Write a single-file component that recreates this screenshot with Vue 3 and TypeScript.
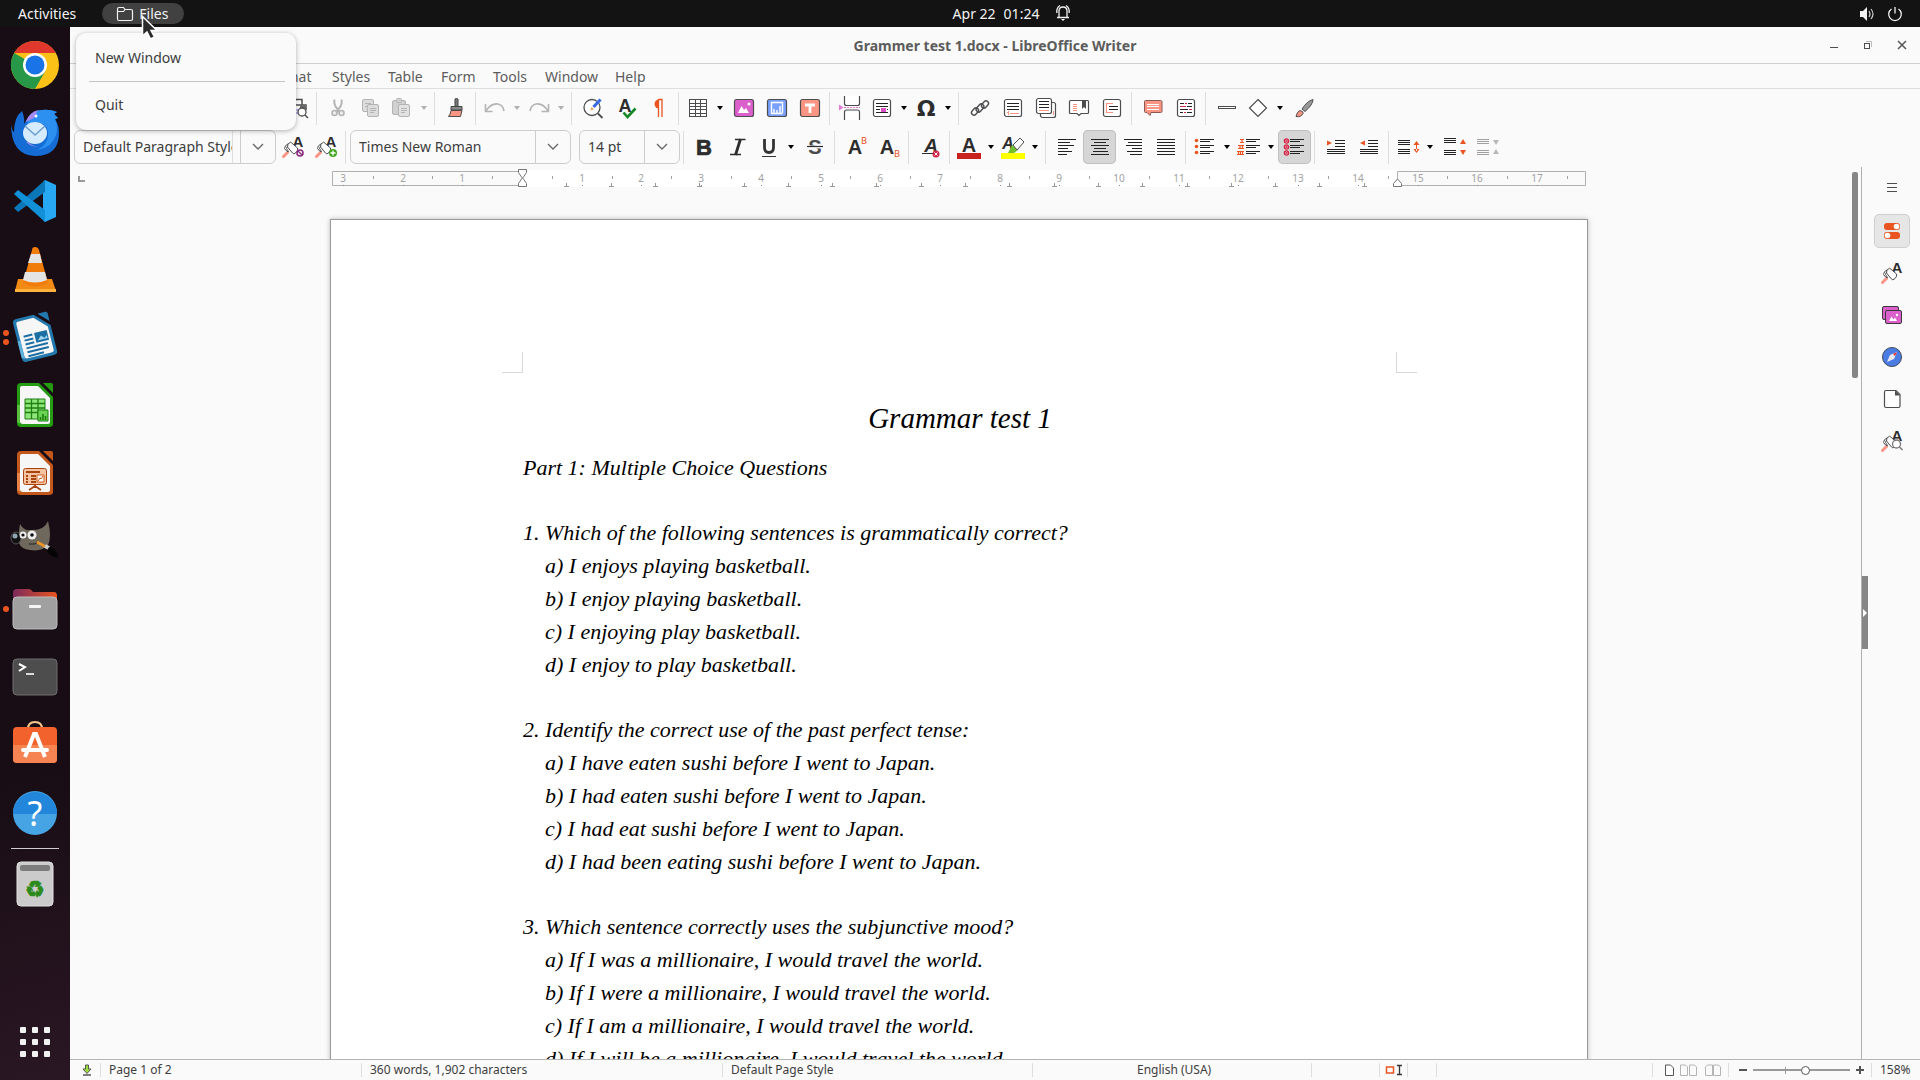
<script setup lang="ts">
import { ref } from 'vue'

type Tool = { icon: string; label: string; kind?: 'split' | 'sep'; active?: boolean; muted?: boolean }

const sep: Tool = { icon: '', label: '', kind: 'sep' }
const tool = (icon: string, label: string, extra: Partial<Tool> = {}): Tool => ({ icon, label, ...extra })
const split = (icon: string, label: string, extra: Partial<Tool> = {}): Tool => ({ icon, label, kind: 'split', ...extra })

const letter = (x: number, y: number, size: number, t: string, fill = '#2d2d2d', more = '') =>
  `<text x="${x}" y="${y}" font-family="Liberation Sans" font-weight="bold" font-size="${size}" text-anchor="middle" fill="${fill}" ${more}>${t}</text>`

const lines = (rows: [number, number, number][], color = '#222') =>
  `<path stroke="${color}" stroke-width="1" fill="none" d="${rows.map(([x, y, w]) => `M${x} ${y}.5h${w}`).join('')}"/>`

const bars = (rows: [number, number, number][], color = '#222') =>
  `<path fill="${color}" d="${rows.map(([x, y, w]) => `M${x} ${y}h${w}v1h-${w}z`).join('')}"/>`

const styleBrush = `<path d="M2.500 21.500l4-4" stroke="#fa9583" stroke-width="3" stroke-linecap="round"/><path d="M3.500 13.500q0-3 4-5l1 1q-3 2-3 4l2 3h-1.500z" fill="#fff" stroke="#4d4d4f"/><path d="M7 9.500l2.500-2.500 7 6q1 2-1.500 4.500t-3.500.5L6.500 12z" fill="#fff" stroke="#4d4d4f"/>`
const frame = (fill = '#fff') => `<rect x="3.500" y="3.500" width="17" height="17" rx="2" fill="${fill}" stroke="#4d4d4f" stroke-width="1.200"/>`

const icons: Record<string, string> = {
  blank: frame(),
  preview: `<path d="M5 9V3.500h12V9M3 17V9h18v5" fill="#fff" stroke="#4d4d4f" stroke-width="1.500"/><path d="M15 9h6v4h-6z" fill="#6a6a6a"/><path d="M9 14h5M9 17h5" stroke="#7b7bf0"/><circle cx="17" cy="16" r="4" fill="#fff" stroke="#4d4d4f" stroke-width="1.300"/><path d="M20 19l3 3" stroke="#4d4d4f" stroke-width="1.500"/>`,
  cut: `<path d="M8.500 3.500q-1 5 2.500 9l3 4M15.500 3.500q1 5-2.500 9l-3 4" stroke="#b4b4b4" stroke-width="2" fill="none"/><circle cx="8.500" cy="17" r="2.500" fill="#eee" stroke="#b4b4b4" stroke-width="1.600"/><circle cx="15.500" cy="17" r="2.500" fill="#eee" stroke="#b4b4b4" stroke-width="1.600"/>`,
  copy: `<g fill="#dcdcdc" stroke="#b4b4b4"><rect x="3.500" y="3.500" width="11" height="12" rx="1.500"/><path d="M6 7.500h6M6 10.500h3"/><rect x="8.500" y="8.500" width="11" height="12" rx="1.500"/><path d="M11 12.500h6M11 14.500h6M11 16.500h4"/></g>`,
  paste: `<g fill="#d0d0d0" stroke="#b4b4b4"><rect x="2.500" y="4.500" width="13" height="14" rx="1.500"/><rect x="6.500" y="2.500" width="5" height="4" rx="1"/><rect x="8.500" y="8.500" width="11" height="12" rx="1.500" fill="#e2e2e2"/><path d="M11 12.500h6M11 14.500h6M11 16.500h4"/></g>`,
  clone: `<path d="M11 3q1.500-1 3 0v8h-3z" fill="#777" stroke="#444"/><path d="M7 10.500h11v3.500H7z" fill="#8a8a8a" stroke="#444"/><path d="M7 14.500h11l-1.500 6H4.500q2-2 2.500-6z" fill="#fa9583" stroke="#4d4d4f"/>`,
  undo: `<path d="M2.500 8v7.500h7M3 15q5-8 12-7 5 1 6 7" fill="none" stroke="#b4b4b4" stroke-width="1.600"/>`,
  redo: `<path d="M21.500 8v7.500h-7M21 15q-5-8-12-7-5 1-6 7" fill="none" stroke="#b4b4b4" stroke-width="1.600"/>`,
  find: `<circle cx="11" cy="11.500" r="8" fill="#fff" stroke="#4d4d4f" stroke-width="1.300"/><path d="M17 17.500l4.500 4.500" stroke="#4d4d4f" stroke-width="1.800"/><path d="M12.500 11l7-7.500" stroke="#3b6be4" stroke-width="3.200"/><path d="M9.500 14.500l1-3.500 2.500 2.300z" fill="#e9a04e"/>`,
  spell: `${letter(11, 16, 18, 'A')}<path d="M9.500 16.500l4 4.500 8-8.500" fill="none" stroke="#178a26" stroke-width="2.600"/>`,
  pilcrow: `<path d="M12 3.500a4.500 4.500 0 0 0 0 9z" fill="#e95420"/><path d="M11.500 3v18M15 3v18M11.500 3.500h4" stroke="#e95420" stroke-width="1.300" fill="none"/>`,
  table: `<rect x="3.500" y="3.500" width="17" height="17" fill="#fff" stroke="#4d4d4f"/><path d="M3 7.500h18M3 10.500h18M3 13.500h18M3 17.500h18M9.500 4v17M14.500 4v17" stroke="#4d4d4f"/>`,
  image: `<rect x="2.500" y="3.500" width="19" height="17" rx="2" fill="#dc60cc" stroke="#4d4d4f" stroke-width="1.200"/><path d="M6 17l3.500-7 2.500 4 2-2 3 5z" fill="#fff"/><circle cx="17" cy="8" r="1.500" fill="#fff"/>`,
  chart: `<rect x="2.500" y="3.500" width="19" height="17" rx="2" fill="#7aa0ff" stroke="#4d4d4f" stroke-width="1.200"/><path d="M6.500 6v11.500h11M6 6.500h11.500V17M9 17v-4M12 17v-3M15 17v-7" fill="none" stroke="#fff" stroke-width="1.400"/>`,
  textbox: `<rect x="2.500" y="3.500" width="19" height="17" rx="2" fill="#fa9583" stroke="#4d4d4f" stroke-width="1.200"/><path d="M7 9h10M12 9v8" stroke="#fff" stroke-width="2.800"/>`,
  pagebreak: `<path d="M5.500 0v7.500q0 2 2 2h11q2 0 2-2V0M5.500 24v-8q0-2 2-2h11q2 0 2 2v8" fill="#fff" stroke="#4d4d4f" stroke-width="1.200"/><path d="M0 8.500v6l4.500-3z" fill="#e07ad4"/><path d="M5 11.500h16" stroke="#e07ad4" stroke-dasharray="2 1"/>`,
  field: `${frame()}${bars([[6, 7, 12], [6, 10, 12], [6, 13, 4], [17, 13, 1], [6, 16, 12]])}<path d="M11 12h5v4h-5z" fill="#dc4fc8"/>`,
  omega: `<text x="12" y="20" font-family="DejaVu Sans" font-weight="bold" font-size="22" text-anchor="middle" fill="#2d2d2d">Ω</text>`,
  link: `<g fill="none" stroke="#4d4d4f" stroke-width="1.400"><rect x="3" y="13" width="8" height="5" rx="2.500" transform="rotate(-48 7 15.500)"/><rect x="7.500" y="9.500" width="9" height="5" rx="2.500" transform="rotate(-48 12 12)"/><rect x="13" y="6" width="8" height="5" rx="2.500" transform="rotate(-48 17 8.500)"/></g>`,
  footnote: `${frame()}${bars([[6, 7, 12], [6, 10, 12], [6, 13, 12]])}<path d="M7.500 15v4M6 16.500h2M9 17.500h9" stroke="#fa9583"/>`,
  endnote: `<rect x="6.500" y="6.500" width="15" height="15" rx="2" fill="#fff" stroke="#4d4d4f" stroke-width="1.200"/><path d="M19.500 15v4" stroke="#fa9583"/><rect x="2.500" y="2.500" width="15" height="15" rx="2" fill="#fff" stroke="#4d4d4f" stroke-width="1.200"/>${bars([[5, 5, 10], [5, 8, 10], [5, 11, 10]])}${bars([[5, 14, 10]], '#fa9583')}`,
  bookmark: `<path d="M3.500 4.500h17q1 0 1 1v11q0 1-1 1H14l-2 2-2-2H3.500q-1 0-1-1v-11q0-1 1-1z" fill="#fff" stroke="#4d4d4f" stroke-width="1.200"/>${bars([[6, 8, 4], [6, 10, 4], [6, 12, 4], [6, 14, 4]], '#fa9583')}<path d="M15 4h4v9l-2-2-2 2z" fill="#4d4d4f"/>`,
  crossref: `${frame()}<path d="M13 7.500H6.500v9H13" stroke="#fa9583" fill="none" stroke-width="1.200"/>${bars([[9, 10, 9], [9, 13, 9]])}`,
  comment: `<path d="M4.500 4.500h15q1.500 0 1.500 1.500v9.500q0 1-1.500 1H10l-1 3-3-3H4.500q-1 0-1-1V5.500q0-1 1-1z" fill="#fa9583" stroke="#8a5a52"/>${bars([[6, 8, 12], [6, 10, 12], [6, 13, 12]], '#fff')}`,
  track: `${frame()}${bars([[6, 7, 4], [14, 7, 4], [13, 10, 5], [6, 13, 8], [6, 16, 3], [13, 16, 5]])}${bars([[11, 7, 2], [6, 10, 6], [15, 13, 3], [10, 16, 2]], '#d02647')}`,
  hline: `<rect x="3.500" y="10.500" width="17" height="2" fill="#fff" stroke="#4d4d4f"/>`,
  shape: `<path d="M12 3.500l8.500 8.500-8.500 8.500L3.500 12z" fill="#fff" stroke="#4d4d4f" stroke-width="1.200"/>`,
  draw: `<path d="M10 13q5-8 11-9.500 0 5-8 12z" fill="#999" stroke="#4d4d4f"/><path d="M4 20.500q1-5 4-6 4 1 3 3-2 4-7 3z" fill="#fa9583" stroke="#4d4d4f"/>`,
  styleUpdate: `${letter(17, 12, 15, 'A')}${styleBrush}<circle cx="19" cy="18" r="3" fill="#fff" stroke="#8b2a80" stroke-width="1.600"/><path d="M17 16l4 4" stroke="#8b2a80" stroke-width="1.400"/>`,
  styleNew: `${letter(17, 12, 15, 'A')}${styleBrush}<circle cx="19" cy="18" r="4" fill="#43a820"/><path d="M16.500 18h5M19 15.500v5" stroke="#fff" stroke-width="1.300"/>`,
  styles: `${letter(17, 12, 15, 'A')}${styleBrush}`,
  inspect: `${letter(17, 12, 15, 'A')}${styleBrush}<circle cx="16.500" cy="15" r="4" fill="#fff" stroke="#777" stroke-width="1.300"/><path d="M19.500 18l3 3" stroke="#777" stroke-width="1.500"/>`,
  bold: letter(11, 20, 22, 'B', '#2d2d2d', 'stroke="#2d2d2d" stroke-width="0.700"'),
  italic: `<path d="M9 4.500h10.500M4 19.500h11" stroke="#2d2d2d" stroke-width="1.600"/><path d="M14.500 4L9.500 20" stroke="#2d2d2d" stroke-width="2.800"/>`,
  underline: `<path d="M7.500 4v8.500q0 5 4.500 5t4.500-5V4" stroke="#333" stroke-width="2.800" fill="none"/><path d="M5 21.500h14" stroke="#333"/>`,
  strike: `${letter(12, 19, 20, 'S', '#4a4a4a')}<path d="M4 12h16" stroke="#fafafa" stroke-width="3"/><path d="M4 11.500h16" stroke="#2d2d2d" stroke-width="1.200"/>`,
  sup: `${letter(11, 19, 20, 'A')}<text x="20" y="9" font-family="DejaVu Sans" font-size="9" text-anchor="middle" fill="#e95420">B</text>`,
  sub: `${letter(10, 19, 20, 'A')}<text x="20" y="22" font-family="DejaVu Sans" font-size="9" text-anchor="middle" fill="#e95420">B</text>`,
  clear: `${letter(13, 17, 19, 'A', '#2d2d2d', 'font-style="italic"')}<path d="M4 18.500h11" stroke="#2d2d2d"/><circle cx="18" cy="19" r="3.500" fill="#d02647"/><path d="M16.500 17.500l3 3m0-3l-3 3" stroke="#fff"/>`,
  fontcolor: `${letter(12, 17, 20, 'A')}<path d="M0 18h24v6H0z" fill="#c9211e"/>`,
  highlight: `${letter(7, 14, 16, 'A', '#2d2d2d', 'font-style="italic"')}<path d="M7 18l4-8 6 5-4 3z" fill="#72c02c"/><path d="M12 10l7-7 4 4-7 8z" fill="#fff" stroke="#4d4d4f"/><path d="M0 18h24v6H0z" fill="#ff0"/>`,
  left: bars([[3, 4, 18], [3, 7, 12], [3, 10, 16], [3, 13, 10], [3, 16, 14], [3, 19, 9]]),
  center: bars([[3, 4, 18], [6, 7, 12], [3, 10, 18], [6, 13, 12], [5, 16, 15], [3, 19, 18]]),
  right: bars([[3, 4, 18], [7, 7, 14], [5, 10, 16], [11, 13, 10], [6, 16, 15], [9, 19, 12]]),
  justify: bars([[3, 4, 18], [3, 7, 18], [3, 10, 18], [3, 13, 18], [3, 16, 18], [3, 19, 18]]),
  bullets: `${bars([[7, 4, 14], [7, 6, 10], [7, 10, 14], [7, 12, 10], [7, 16, 14], [7, 18, 10]])}<g fill="#e95420"><circle cx="3.500" cy="5.500" r="1.800"/><circle cx="3.500" cy="11.500" r="1.800"/><circle cx="3.500" cy="17.500" r="1.800"/></g>`,
  numbers: `${bars([[9, 4, 14], [9, 6, 10], [9, 10, 14], [9, 12, 10], [9, 16, 14], [9, 18, 10]])}<path d="M3 4.500h4M3 7.500h4M5 4v4M1 10.500h6M1 13.500h6M3 10v4M5.500 10v4M0 16.500h7M0 19.500h7M1.500 16v4M3.500 16v4M5.500 16v4" stroke="#e95420" stroke-width="1.200"/>`,
  nolist: `${bars([[7, 4, 14], [7, 6, 10], [7, 10, 14], [7, 12, 10], [7, 16, 14], [7, 18, 10]])}<g fill="#f6c5cd" stroke="#d02647" stroke-width="1.200"><circle cx="3.500" cy="6" r="2.200"/><circle cx="3.500" cy="12" r="2.200"/><circle cx="3.500" cy="18" r="2.200"/></g><path d="M2 4.500l3 3m0-3l-3 3m0 3l3 3m0-3l-3 3m0 3l3 3m0-3l-3 3" stroke="#d02647"/>`,
  indent: `${bars([[11, 5, 10], [11, 8, 10], [11, 11, 10], [3, 14, 18], [3, 16, 18], [3, 18, 18]])}<path d="M3 5.500v5l5-2.500z" fill="#e95420"/>`,
  outdent: `${bars([[11, 5, 10], [11, 8, 10], [11, 11, 10], [3, 14, 18], [3, 16, 18], [3, 18, 18]])}<path d="M8 5.500v5l-5-2.500z" fill="#e95420"/>`,
  spacing: `${bars([[2, 5, 12], [2, 7, 12], [2, 9, 12], [2, 14, 12], [2, 16, 12], [2, 18, 12]])}<path d="M17.500 10l3-4 3 4zM17.500 14l3 4 3-4zM20 8h1v8h-1z" fill="#e95420"/>`,
  paraplus: `${bars([[2, 3, 12], [2, 5, 12], [2, 7, 12], [2, 15, 12], [2, 17, 12], [2, 19, 12]])}<path d="M18 9l3-5 3 5zM18 15l3 5 3-5z" fill="#e95420"/>`,
  paraminus: `${bars([[2, 4, 12], [2, 6, 12], [2, 8, 12], [2, 15, 12], [2, 17, 12], [2, 19, 12]], '#a0a0a0')}<path d="M18 5l3 5 3-5zM18 19l3-5 3 5z" fill="#b8b8b8"/>`,
  burger: lines([[7, 7, 10], [7, 11, 10], [7, 15, 10]], '#4d4d4f'),
  props: `<rect x="4" y="4" width="16" height="7" rx="3" fill="#e95420"/><rect x="4" y="13" width="16" height="7" rx="3" fill="#e95420"/><circle cx="16.500" cy="7.500" r="2.800" fill="#fff"/><circle cx="7.500" cy="16.500" r="2.800" fill="#fff"/>`,
  gallery: `<rect x="2.500" y="3.500" width="16" height="13" rx="1.500" fill="#dc60cc" stroke="#3a3a3a"/><rect x="5.500" y="7.500" width="16" height="13" rx="1.500" fill="#dc60cc" stroke="#3a3a3a"/><path d="M9 18l2.500-4.500 2 3 1.500-2L17 18z" fill="#fff"/><circle cx="17" cy="12" r="1.200" fill="#fff"/>`,
  navigator: `<circle cx="12" cy="12" r="9.500" fill="#4a7ce4" stroke="#43485a"/><path d="M17 7l-3 7-7 3 3-7z" fill="#e8e8f0"/><path d="M17 7l-2 4-2-2z" fill="#e03030"/>`,
  pageicon: `<path d="M4.500 5q0-1.500 1.500-1.500h10l4 4V19q0 1.500-1.500 1.500H6q-1.500 0-1.500-1.500z" fill="#fff" stroke="#4d4d4f" stroke-width="1.200"/><path d="M15 3.500v5h5z" fill="#4d4d4f"/>`,
}

const standardBar: Tool[] = [
  split('blank', 'New'), split('blank', 'Open'), split('blank', 'Save'), sep,
  tool('blank', 'Export as PDF'), tool('blank', 'Print'), tool('preview', 'Print Preview'), sep,
  tool('cut', 'Cut', { muted: true }), tool('copy', 'Copy', { muted: true }), split('paste', 'Paste', { muted: true }), sep,
  tool('clone', 'Clone Formatting'), sep,
  split('undo', 'Undo', { muted: true }), split('redo', 'Redo', { muted: true }), sep,
  tool('find', 'Find and Replace'), tool('spell', 'Check Spelling'), tool('pilcrow', 'Formatting Marks'), sep,
  split('table', 'Insert Table'), tool('image', 'Insert Image'), tool('chart', 'Insert Chart'), tool('textbox', 'Insert Text Box'), sep,
  tool('pagebreak', 'Insert Page Break'), split('field', 'Insert Field'), split('omega', 'Insert Special Characters'), sep,
  tool('link', 'Insert Hyperlink'), tool('footnote', 'Insert Footnote'), tool('endnote', 'Insert Endnote'),
  tool('bookmark', 'Insert Bookmark'), tool('crossref', 'Insert Cross-reference'), sep,
  tool('comment', 'Insert Comment'), tool('track', 'Track Changes'), sep,
  tool('hline', 'Insert Line'), split('shape', 'Basic Shapes'), tool('draw', 'Show Draw Functions'),
]

const styleTools: Tool[] = [tool('styleUpdate', 'Update Style'), tool('styleNew', 'New Style'), sep]

const formatTools: Tool[] = [
  sep, tool('bold', 'Bold'), tool('italic', 'Italic'), split('underline', 'Underline'), tool('strike', 'Strikethrough'), sep,
  tool('sup', 'Superscript'), tool('sub', 'Subscript'), sep, tool('clear', 'Clear Formatting'), sep,
  split('fontcolor', 'Font Color'), split('highlight', 'Highlighting'), sep,
  tool('left', 'Align Left'), tool('center', 'Align Center', { active: true }), tool('right', 'Align Right'), tool('justify', 'Justified'), sep,
  split('bullets', 'Bullets'), split('numbers', 'Numbering'), tool('nolist', 'No List', { active: true }), sep,
  tool('indent', 'Increase Indent'), tool('outdent', 'Decrease Indent'), sep,
  split('spacing', 'Line Spacing'), tool('paraplus', 'Increase Paragraph Spacing'), tool('paraminus', 'Decrease Paragraph Spacing', { muted: true }),
]

const sideTabs = [
  { icon: 'props', label: 'Properties', active: true },
  { icon: 'styles', label: 'Styles' },
  { icon: 'gallery', label: 'Gallery' },
  { icon: 'navigator', label: 'Navigator' },
  { icon: 'pageicon', label: 'Page' },
  { icon: 'inspect', label: 'Style Inspector' },
]

const menus = ['File', 'Edit', 'View', 'Insert', 'Format', 'Styles', 'Table', 'Form', 'Tools', 'Window', 'Help']

const sheet = (dark: string, light: string, inner: string) =>
  `<path d="M10 2h18l14 14v27q0 3-4 3H10q-4 0-4-4V6q0-4 4-4z" fill="${dark}"/><path d="M11 5h16l12 12v24q0 2-3 2H12q-3 0-3-3V7q0-2 2-2z" fill="#f6f6f6"/><path d="M32 2h8q2 0 2 2v8z" fill="${dark}"/><path d="M6 24h3v19l-3-2z" fill="${light}"/>${inner}`

const dock = [
  { name: 'Google Chrome', dots: 0, art: `<circle cx="24" cy="24" r="24" fill="#fbc116"/><path d="M24 12L3.200 12a24 24 0 0 1 41.600 0z" fill="#e0382c"/><path d="M3.200 12A24 24 0 0 0 24 48l10.400-18-10.400-6z" fill="#279847"/><circle cx="24" cy="24" r="12" fill="#fff"/><circle cx="24" cy="24" r="9.500" fill="#1b73e8"/>` },
  { name: 'Thunderbird', dots: 0, art: `<path d="M0 15q1 7 3 8Q3 8 11 2q3 7 2 13l5-8q4-6 13-6 8-1 15 2l-3 2 4 4-3 1q4 6 4 14 0 23-24 23Q0 46 0 15z" fill="#156cd4"/><path d="M18 8q5-7 13-7 8-1 15 2l-3 2 4 4-3 1q5 12-2 22-6 8-16 9 12-6 11-18-2-10-12-10-6 0-9 4z" fill="#2b90f0"/><path d="M15 12q3-8 12-11l-4 8-8 4z" fill="#a488ee"/><ellipse cx="24" cy="24" rx="12" ry="11" fill="#d4ecfd"/><path d="M14 17l10 9 10-9" fill="none" stroke="#6d9ed0" stroke-width="1.500"/><path d="M17 33q5 5 10 4-5 2-12-4z" fill="#a488ee"/><circle cx="25" cy="7" r="1.500" fill="#fff"/>` },
  { name: 'Visual Studio Code', dots: 0, art: `<path d="M34 3l11 5v32l-11 5-2-2V5z" fill="#28a8f2"/><path d="M34 3L3 31l4 4 27-20z" fill="#0b76b8"/><path d="M34 45L3 17l4-4 27 20z" fill="#1290d8"/>` },
  { name: 'VLC', dots: 0, art: `<path d="M7 34h34l4 12H4z" fill="#f28a16"/><path d="M4 44h41v3H4z" fill="#ffb13d"/><path d="M24 2q3 0 4 3l9 33q-13 7-25 0L21 5q0-3 3-3z" fill="#f07c0c"/><path d="M20 9h9l2 9H17zM14 27h20l2 8q-12 5-24 0z" fill="#e4e4e4"/>` },
  { name: 'LibreOffice Writer', dots: 2, art: `<g transform="rotate(-14 24 24)">${sheet('#2379ad', '#5fb1dc', '<path d="M13 21h9M13 25h9M13 29h9M13 33h22M13 37h22M13 41h16" stroke="#1b6fa3" stroke-width="2"/><path d="M24 20h13v10H24z" fill="#1b6fa3"/><path d="M26 28l4-4 3 3 3-2v3z" fill="#9fd4f0"/>')}</g>` },
  { name: 'LibreOffice Calc', dots: 0, art: sheet('#249b12', '#57c03e', '<path d="M14 18h20v20H14z" fill="#8ee67a" stroke="#1f7f10"/><path d="M14 22.500h20M14 27h20M14 31.500h20M20.500 18v20M27 18v20" stroke="#1f7f10" stroke-width="1.300"/><path d="M27 29h10v11H27z" fill="#6bd354" stroke="#1f7f10"/><path d="M29.500 39v-3M32 39v-6M34.500 39v-4" stroke="#1f7f10" stroke-width="1.600"/>') },
  { name: 'LibreOffice Impress', dots: 0, art: sheet('#c4581c', '#e98248', '<rect x="12.500" y="19.500" width="23" height="16" rx="2" fill="#f6c3a0" stroke="#a8450f"/><path d="M20 27h5M20 30h5M20 33h5M15 27h2M15 30h2M15 33h2M15 23h14" stroke="#a8450f" stroke-width="1.800"/><path d="M26 26h7v7h-7z" fill="#fff" stroke="#d05c1c"/><path d="M27 32l2-3 1 1 2-3" fill="none" stroke="#d05c1c"/><path d="M24 36v2m0-1l-6 4m6-4l6 4" stroke="#a8450f" stroke-width="1.600"/>') },
  { name: 'GIMP', dots: 0, art: `<g transform="translate(0 3)"><path d="M9 4q4 7 10 6 14 1 18-9 4 16 0 24-6 7-18 5-9-1-11-7-1-8 1-19z" fill="#6f685c"/><ellipse cx="5" cy="18" rx="5" ry="6" fill="#111" stroke="#555"/><circle cx="4" cy="16" r="2.500" fill="#8fa7b0"/><circle cx="12" cy="15" r="3.500" fill="#eee"/><circle cx="21" cy="15" r="4.500" fill="#eee"/><circle cx="12" cy="15" r="1.600" fill="#111"/><circle cx="21" cy="15" r="1.800" fill="#111"/><path d="M18 24q6 1 10-2" stroke="#222" fill="none"/><path d="M26 22l9 5" stroke="#e8942a" stroke-width="3"/><path d="M34 26l4 2" stroke="#ccc" stroke-width="4"/><path d="M38 27q9 1 9 11-9-2-11-7z" fill="#050505"/></g>` },
  { name: 'Files', dots: 1, art: `<defs><linearGradient id="fg"><stop offset="0" stop-color="#7c2a5c"/><stop offset="1" stop-color="#e95420"/></linearGradient></defs><path d="M2 14V8q0-4 4-4h12q2 0 4 3h21q3 0 3 4v5z" fill="url(#fg)"/><rect x="2" y="12" width="44" height="32" rx="4" fill="#a0a0a0" stroke="#bcbcbc"/><rect x="18" y="20" width="12" height="3" rx="1" fill="#f4f4f4"/>` },
  { name: 'Terminal', dots: 0, art: `<rect x="2" y="6" width="44" height="36" rx="4" fill="#4d4d4d" stroke="#6e6e6e"/><path d="M8 11l6 3-6 4" stroke="#fff" stroke-width="2" fill="none"/><path d="M15 21h8" stroke="#fff" stroke-width="1.600"/>` },
  { name: 'Ubuntu Software', dots: 0, art: `<path d="M17 8q0-7 7-7t7 7" stroke="#f6c48e" stroke-width="2" fill="none"/><rect x="2" y="6" width="44" height="36" rx="4" fill="#f2622c"/><path d="M2 24h44v14q0 4-4 4H6q-4 0-4-4z" fill="#f58452"/><path d="M14 36l9-23h2l9 23" stroke="#fff" stroke-width="4" fill="none"/><path d="M12 29h24" stroke="#fff" stroke-width="4" stroke-linecap="round"/>` },
  { name: 'Help', dots: 0, art: `<circle cx="24" cy="24" r="22" fill="#46a4e4"/><path d="M2 25a22 22 0 0 1 44 0z" fill="#2286da"/><text x="24" y="37" font-family="Noto Sans" font-size="34" text-anchor="middle" fill="#fff">?</text>` },
]

const doc = [
  '', '1. Which of the following sentences is grammatically correct?',
  '    a) I enjoys playing basketball.', '    b) I enjoy playing basketball.',
  '    c) I enjoying play basketball.', '    d) I enjoy to play basketball.', '',
  '2. Identify the correct use of the past perfect tense:',
  '    a) I have eaten sushi before I went to Japan.', '    b) I had eaten sushi before I went to Japan.',
  '    c) I had eat sushi before I went to Japan.', '    d) I had been eating sushi before I went to Japan.', '',
  '3. Which sentence correctly uses the subjunctive mood?',
  '    a) If I was a millionaire, I would travel the world.', '    b) If I were a millionaire, I would travel the world.',
  '    c) If I am a millionaire, I would travel the world.', '    d) If I will be a millionaire, I would travel the world.',
]

// Ruler geometry: one centimetre at the current zoom, measured from the left text margin.
const cm = 59.7
const origin = 192
const marks = Array.from({ length: 21 }, (_, i) => i - 3).map(n => ({ n, label: String(Math.abs(n)), x: Math.round(origin + n * cm) })).filter(m => m.n !== 0 && m.x < 1240)
const halves = Array.from({ length: 21 }, (_, i) => Math.round(origin + (i - 2.5) * cm)).filter(x => x < 1250)
const tabs = Array.from({ length: 19 }, (_, i) => Math.round(origin + (i + 1) * 44.3))

const paragraphStyle = ref('Default Paragraph Style')
const fontName = ref('Times New Roman')
const fontSize = ref('14 pt')
const zoomLevel = ref(55)
</script>

<template>
  <div class="desktop">
    <header class="topbar">
      <div class="top-side">
        <button class="activities">Activities</button>
        <button class="app-pill">
          <svg width="18" height="16" viewBox="0 0 18 16"><path d="M1.500 3q0-1.500 1.500-1.500h4.500L9 3.500h6q1.500 0 1.500 1.500v8q0 1.500-1.500 1.500H3q-1.500 0-1.500-1.500zM2 5.500h5.500L9 3.500" fill="none" stroke="#f2f2f2" stroke-width="1.200" /></svg>
          Files
        </button>
      </div>
      <button class="clock">
        <span>Apr 22</span><span>01:24</span>
        <svg class="bell" width="16" height="18" viewBox="0 0 16 18"><path d="M2 13.500h12M4 13V7q0-4 4-4t4 4v6M2 9q-1-5 3-7.500M14 9q1-5-3-7.500" fill="none" stroke="#f2f2f2" stroke-width="1.300" /><path d="M6 15h4l-2 2z" fill="#fff" /></svg>
      </button>
      <div class="top-side end">
        <svg width="16" height="16" viewBox="0 0 16 16"><path d="M1 5h3l4-4v14l-4-4H1z" fill="#f2f2f2" /><path d="M10 5q2 3 0 6M12 3q4 5 0 10" fill="none" stroke="#ccc" stroke-width="1.200" /></svg>
        <svg width="16" height="16" viewBox="0 0 16 16"><path d="M4.500 3A6.300 6.300 0 1 0 11.500 3M8 1v6.500" fill="none" stroke="#f2f2f2" stroke-width="1.300" /></svg>
      </div>
    </header>

    <div class="workspace">
      <nav class="dock" aria-label="Dock">
        <button v-for="app in dock" :key="app.name" class="dock-item" :aria-label="app.name">
          <span class="dots"><i v-for="d in app.dots" :key="d"></i></span>
          <svg width="48" height="48" viewBox="0 0 48 48" v-html="app.art"></svg>
        </button>
        <hr class="dock-line">
        <button class="dock-item" aria-label="Trash">
          <svg width="48" height="48" viewBox="0 0 48 48"><rect x="6" y="2" width="36" height="44" rx="4" fill="#cbcbcb" stroke="#e2e2e2" /><rect x="9" y="5" width="30" height="6" rx="2" fill="#7c7c7c" /><text x="24" y="37" font-family="DejaVu Sans" font-size="22" text-anchor="middle" fill="#2c8a1c" stroke="#2c8a1c">♻</text></svg>
        </button>
        <button class="dock-item apps" aria-label="Show Applications">
          <svg width="30" height="30" viewBox="0 0 30 30" fill="#f2f2f2"><template v-for="r in 3" :key="r"><rect v-for="c in 3" :key="c" :x="(c - 1) * 12" :y="(r - 1) * 12" width="6" height="6" rx="1" /></template></svg>
        </button>
      </nav>

      <main class="window">
        <div class="titlebar">
          <h1>Grammer test 1.docx - LibreOffice Writer</h1>
          <div class="controls">
            <button aria-label="Minimize"><svg width="12" height="12" viewBox="0 0 12 12"><path d="M2 8.500h8" stroke="#4d4d4d" /></svg></button>
            <button aria-label="Restore"><svg width="12" height="12" viewBox="0 0 12 12" fill="none"><path d="M4 2.500h5.500V8" stroke="#bbb" /><rect x="2.500" y="4.500" width="5" height="5" stroke="#4d4d4d" /></svg></button>
            <button aria-label="Close"><svg width="12" height="12" viewBox="0 0 12 12"><path d="M2 2l8 8M10 2l-8 8" stroke="#555" stroke-width="1.500" /></svg></button>
          </div>
        </div>

        <nav class="menubar" aria-label="Menu">
          <button v-for="m in menus" :key="m">{{ m }}</button>
        </nav>

        <div class="toolbar" role="toolbar" aria-label="Standard">
          <template v-for="(t, i) in standardBar" :key="i">
            <span v-if="t.kind === 'sep'" class="tool-sep"></span>
            <button v-else class="tool" :class="{ split: t.kind === 'split', muted: t.muted }" :aria-label="t.label">
              <svg width="24" height="24" viewBox="0 0 24 24" v-html="icons[t.icon]"></svg>
              <span v-if="t.kind === 'split'" class="caret"></span>
            </button>
          </template>
        </div>

        <div class="toolbar formatting" role="toolbar" aria-label="Formatting">
          <div class="combo style-combo">
            <input v-model="paragraphStyle" aria-label="Paragraph style">
            <button aria-label="Choose paragraph style"><svg width="12" height="8" viewBox="0 0 12 8"><path d="M1 1l5 5 5-5" fill="none" stroke="#666" stroke-width="1.300" /></svg></button>
          </div>
          <template v-for="(t, i) in styleTools" :key="'s' + i">
            <span v-if="t.kind === 'sep'" class="tool-sep"></span>
            <button v-else class="tool" :aria-label="t.label"><svg width="24" height="24" viewBox="0 0 24 24" v-html="icons[t.icon]"></svg></button>
          </template>
          <div class="combo font-combo">
            <input v-model="fontName" aria-label="Font name">
            <button aria-label="Choose font"><svg width="12" height="8" viewBox="0 0 12 8"><path d="M1 1l5 5 5-5" fill="none" stroke="#666" stroke-width="1.300" /></svg></button>
          </div>
          <div class="combo size-combo">
            <input v-model="fontSize" aria-label="Font size">
            <button aria-label="Choose font size"><svg width="12" height="8" viewBox="0 0 12 8"><path d="M1 1l5 5 5-5" fill="none" stroke="#666" stroke-width="1.300" /></svg></button>
          </div>
          <template v-for="(t, i) in formatTools" :key="'f' + i">
            <span v-if="t.kind === 'sep'" class="tool-sep"></span>
            <button v-else class="tool" :class="{ split: t.kind === 'split', active: t.active, muted: t.muted }" :aria-label="t.label">
              <svg width="24" height="24" viewBox="0 0 24 24" v-html="icons[t.icon]"></svg>
              <span v-if="t.kind === 'split'" class="caret"></span>
            </button>
          </template>
        </div>

        <div class="editor">
          <div class="canvas">
            <div class="ruler">
              <span class="tab-kind"></span>
              <svg width="1258" height="22" viewBox="0 0 1258 22" font-family="Noto Sans" font-size="10" fill="#a2a2a2">
                <rect x="192" y="3" width="876" height="17" fill="#fff" />
                <path d="M192 4.500H2.500V18.500H192M1067.500 19V4.500H1255.500V18.500H1067" fill="none" stroke="#b0b0b0" />
                <text v-for="m in marks" :key="m.n" :x="m.x" y="15" text-anchor="middle">{{ m.label }}</text>
                <rect v-for="m in marks" :key="'d' + m.n" :x="m.x" y="18" width="1" height="1" fill="#888" />
                <rect v-for="x in halves" :key="'h' + x" :x="x" y="9" width="1" height="3" />
                <path v-for="x in tabs" :key="'t' + x" :d="`M${x + .5} 16v3M${x - 2} 19.500h5`" stroke="#999" />
                <path d="M188.500 2.500h8v3l-3 4.500-1 1-1-1-3-4.500zM188.500 19.500h8v-3l-3-4.500-1-1-1 1-3 4.500zM1063.500 19.500h8v-3l-4-4.500-4 4.500z" fill="#fff" stroke="#777" />
              </svg>
            </div>
            <article class="page">
              <div class="margin-marks"><span></span><span class="flip"></span></div>
              <div class="text">
                <h2>Grammar test 1</h2>
                <p>Part 1: Multiple Choice Questions</p>
                <p v-for="(line, i) in doc" :key="i" :class="{ empty: !line }">{{ line }}</p>
              </div>
            </article>
          </div>
          <div class="scroll"><div class="thumb"></div></div>
          <aside class="sidebar">
            <button class="side-tab" aria-label="Sidebar settings"><svg width="24" height="24" viewBox="0 0 24 24" v-html="icons.burger"></svg></button>
            <button v-for="s in sideTabs" :key="s.label" class="side-tab" :class="{ active: s.active }" :aria-label="s.label">
              <svg width="24" height="24" viewBox="0 0 24 24" v-html="icons[s.icon]"></svg>
            </button>
            <button class="handle" aria-label="Hide sidebar"><svg width="4" height="8" viewBox="0 0 4 8"><path d="M0 0l4 4-4 4z" fill="#fff" /></svg></button>
          </aside>
        </div>

        <footer class="status">
          <span class="cell save"><svg width="10" height="12" viewBox="0 0 10 12"><path d="M3.500 1h3v4h2.500L5 9.500 1 5h2.500z" fill="#9be03c" stroke="#555" /><path d="M1 11h8" stroke="#555" stroke-width="1.500" /></svg></span>
          <span class="cell pages">Page 1 of 2</span>
          <span class="cell words">360 words, 1,902 characters</span>
          <span class="cell page-style">Default Page Style</span>
          <span class="cell language">English (USA)</span>
          <span class="cell insert"></span>
          <span class="cell select"><svg width="18" height="12" viewBox="0 0 18 12"><rect x="1.500" y="3" width="7" height="6" fill="none" stroke="#e95420" stroke-width="1.500" /><path d="M12 1.500h5M12 10.500h5M14.500 2v8" stroke="#333" stroke-width="1.300" /></svg></span>
          <span class="cell sign"></span>
          <span class="cell spare"></span>
          <span class="cell views">
            <button aria-label="Single-page view"><svg width="9" height="12" viewBox="0 0 9 12"><path d="M.5 2V1h5l3 3v7.500h-8z" fill="#fff" stroke="#555" /></svg></button>
            <button aria-label="Multiple-page view"><svg width="20" height="12" viewBox="0 0 20 12" fill="none" stroke="#b4b4b4"><path d="M1.500 1h5l2 2v8.500h-7zM10.500 1h5l2 2v8.500h-7z" /></svg></button>
            <button aria-label="Book view"><svg width="18" height="12" viewBox="0 0 18 12" fill="none" stroke="#b4b4b4"><path d="M8.500 1h-5l-2 2v8.500h7zM9.500 1h5l2 2v8.500h-7z" /></svg></button>
          </span>
          <span class="cell zoomer">
            <button aria-label="Zoom out"><svg width="10" height="10" viewBox="0 0 10 10"><path d="M1 5h8" stroke="#555" stroke-width="2" /></svg></button>
            <input v-model="zoomLevel" type="range" min="0" max="100" aria-label="Zoom">
            <button aria-label="Zoom in"><svg width="10" height="10" viewBox="0 0 10 10"><path d="M1 5h8M5 1v8" stroke="#555" stroke-width="2" /></svg></button>
          </span>
          <span class="cell percent">158%</span>
        </footer>
      </main>
    </div>

    <div class="app-menu" role="menu">
      <button role="menuitem">New Window</button>
      <hr>
      <button role="menuitem">Quit</button>
    </div>
    <svg class="pointer" width="18" height="26" viewBox="0 0 18 26"><path d="M1.500 1.500v19.500l4.500-4 3.500 7 4-2-3.500-6.500h6z" fill="#2a2a2a" stroke="#fff" stroke-width="1.500" /></svg>
  </div>
</template>

<style>
body { margin: 0; overflow: hidden; }
</style>

<style scoped>
.desktop { position: relative; display: flex; flex-direction: column; height: 100vh; font: 14px/20px "Noto Sans", sans-serif; color: #3d3d3d; background: #fafafa; }
button { margin: 0; padding: 0; border: 0; background: none; font: inherit; color: inherit; }
svg { display: block; flex: none; overflow: visible; }

.topbar { display: flex; align-items: center; height: 27px; flex: none; background: #131313; color: #f2f2f2; }
.top-side { flex: 1; display: flex; align-items: center; }
.top-side.end { justify-content: flex-end; gap: 12px; padding-right: 17px; box-sizing: border-box; }
.activities { margin-left: 18px; margin-right: 26px; }
.app-pill { display: flex; align-items: center; gap: 5px; height: 21px; padding: 0 16px 0 14px; border-radius: 11px; background: #414141; }
.clock { display: flex; gap: 8px; margin-left: 121px; }
.bell { margin-left: 8px; }

.workspace { display: flex; flex: 1; min-height: 0; }
.dock { width: 70px; flex: none; display: flex; flex-direction: column; box-sizing: border-box; padding-top: 4px; background: linear-gradient(165deg, #180d14 70%, #2a1724); }
.dock-item { position: relative; display: flex; align-items: center; justify-content: center; width: 70px; height: 68px; flex: none; }
.dots { position: absolute; left: 3px; display: flex; flex-direction: column; gap: 3px; }
.dots i { width: 6px; height: 6px; border-radius: 3px; background: #e95420; }
.dock-line { width: 48px; height: 1px; margin: 1px auto; border: 0; background: #d0cdcf; }
.apps { margin-top: auto; margin-bottom: 4px; }

.window { flex: 1; min-width: 0; display: flex; flex-direction: column; background: #fafafa; }
.titlebar { position: relative; display: flex; align-items: center; justify-content: center; height: 36px; flex: none; border-bottom: 1px solid #cfcfcf; }
.titlebar h1 { margin: 0; padding-top: 2px; font-size: 14px; line-height: 20px; font-weight: 700; color: #5c5c5c; }
.controls { position: absolute; right: 12px; display: flex; gap: 22px; }
.menubar { display: grid; grid-template-columns: 39px 42px 47px 57px 68px 56px 53px 52px 52px 70px 46px; box-sizing: border-box; height: 25px; flex: none; padding: 2px 0 0 9px; border-bottom: 1px solid #dedede; color: #5c5c5c; }
.menubar button { text-align: left; }

.toolbar { display: flex; align-items: center; height: 38px; flex: none; padding-left: 4px; }
.toolbar.formatting { height: 40px; }
.tool { display: flex; align-items: center; box-sizing: border-box; width: 33px; height: 34px; padding-left: 5px; flex: none; border-radius: 5px; }
.tool.split { width: 44px; padding-left: 3px; }
.tool.active { background: #d6d6d6; box-shadow: inset 0 0 0 1px #c0c0c0; }
.caret { margin-left: 7px; border: 3px solid transparent; border-top: 4px solid #000; border-bottom: 0; }
.tool.muted .caret { border-top-color: #b0b0b0; }
.tool-sep { width: 1px; height: 33px; margin: 0 4px 0 3px; flex: none; background: #dedede; }
.combo { display: flex; box-sizing: border-box; height: 34px; flex: none; border: 1px solid #cdcdcd; border-radius: 6px; overflow: hidden; }
.combo input { flex: 1; min-width: 0; padding: 0 0 0 8px; border: 0; outline: 0; background: none; font: inherit; color: #3d3d3d; }
.combo button { display: flex; align-items: center; justify-content: center; width: 35px; border-left: 1px solid #cdcdcd; }
.style-combo { width: 202px; }
.style-combo input { margin-right: 7px; border-right: 1px solid #dedede; }
.font-combo { width: 221px; margin-right: 8px; }
.size-combo { width: 101px; }

.editor { display: flex; flex: 1; min-height: 0; overflow: hidden; }
.canvas { flex: 1; min-width: 0; display: flex; flex-direction: column; align-items: center; padding-right: 1px; }
.ruler { position: relative; width: 100%; display: flex; justify-content: center; }
.tab-kind { position: absolute; left: 8px; top: 9px; width: 5px; height: 4px; border: solid #999; border-width: 0 0 2px 2px; }
.page { box-sizing: border-box; width: 1258px; flex: none; margin-top: 30px; padding: 132px 170px 0 171px; border: 1px solid #999; background: #fff; box-shadow: 0 0 5px rgba(0, 0, 0, .25); }
.margin-marks { display: flex; justify-content: space-between; }
.margin-marks span { width: 20px; height: 20px; border: solid #d8d8d8; border-width: 0 1px 1px 0; }
.margin-marks .flip { border-width: 0 0 1px 1px; }
.text { padding: 26px 20px 0 21px; font-family: "Liberation Serif", serif; font-style: italic; color: #000; }
.text h2 { margin: 0 0 14px; font-size: 29px; line-height: 38px; font-weight: 400; text-align: center; }
.text p { margin: 0; font-size: 22px; line-height: 33px; white-space: pre; }
.text .empty { height: 32px; }
.scroll { width: 12px; flex: none; padding-top: 5px; }
.thumb { width: 6px; height: 206px; margin-left: 3px; border-radius: 2px; background: #868686; }
.sidebar { position: relative; width: 58px; flex: none; display: flex; flex-direction: column; align-items: center; border-left: 1px solid #b0b0b0; }
.side-tab { display: flex; align-items: center; justify-content: center; box-sizing: border-box; width: 36px; height: 34px; margin: 4px 0 4px 2px; flex: none; border-radius: 5px; }
.side-tab.active { margin-top: 5px; background: #e6e6e6; border: 1px solid #cfcfcf; }
.handle { position: absolute; left: 0; top: 409px; width: 6px; height: 73px; display: flex; align-items: center; justify-content: center; background: #868686; }

.status { display: flex; align-items: center; box-sizing: border-box; height: 21px; flex: none; border-top: 1px solid #b4b4b4; font-size: 12px; line-height: 16px; }
.cell { box-sizing: border-box; display: flex; align-items: center; height: 14px; padding-left: 8px; border-left: 1px solid #dedede; flex: none; }
.save { width: 30px; padding-left: 12px; border-left: 0; }
.pages { width: 261px; }
.words { width: 361px; }
.page-style { width: 310px; }
.language { width: 279px; padding-left: 104px; }
.insert { width: 68px; }
.select { width: 28px; padding-left: 5px; }
.sign { width: 29px; }
.spare { flex: 1; }
.views { width: 76px; padding-left: 12px; gap: 5px; }
.zoomer { width: 143px; padding-left: 9px; gap: 5px; }
.zoomer input { width: 97px; height: 12px; margin: 0; appearance: none; background: linear-gradient(#999, #999) 32px center / 1px 7px no-repeat, linear-gradient(#999, #999) center / 100% 2px no-repeat; }
.zoomer input::-webkit-slider-thumb { appearance: none; box-sizing: border-box; width: 9px; height: 9px; border: 1px solid #555; border-radius: 5px; background: #fff; }
.percent { width: 49px; }

.app-menu { position: absolute; left: 76px; top: 33px; box-sizing: border-box; width: 220px; height: 97px; padding: 9px 11px 8px 13px; display: flex; flex-direction: column; gap: 7px; border-radius: 10px; background: #fafafa; box-shadow: 0 1px 5px rgba(0, 0, 0, .3); }
.app-menu button { height: 32px; padding-left: 6px; text-align: left; }
.app-menu hr { width: 100%; height: 1px; margin: 0; border: 0; background: #c4c4c4; }
.pointer { position: absolute; left: 141px; top: 15px; }
</style>
